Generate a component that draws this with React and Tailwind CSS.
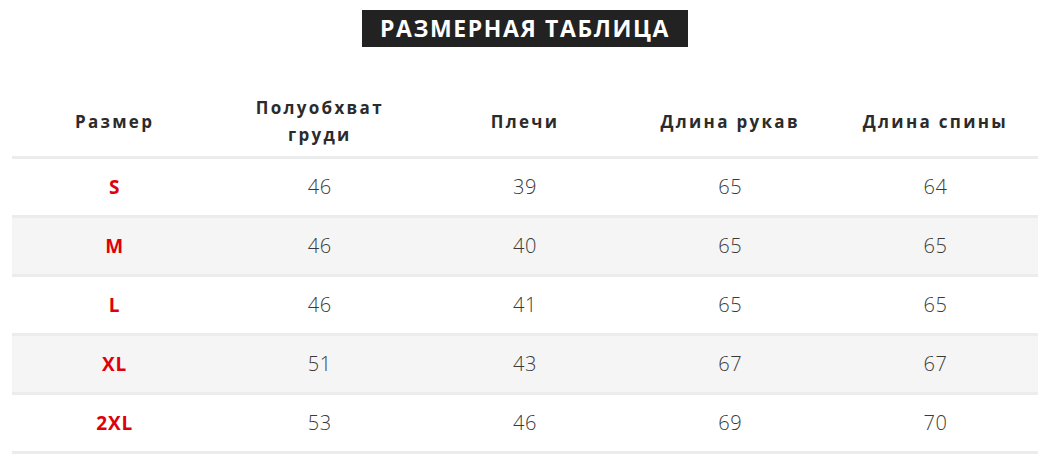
const headers = ['Размер', 'Полуобхват груди', 'Плечи', 'Длина рукав', 'Длина спины'];

const rows = [
  ['S', 46, 39, 65, 64],
  ['M', 46, 40, 65, 65],
  ['L', 46, 41, 65, 65],
  ['XL', 51, 43, 67, 67],
  ['2XL', 53, 46, 69, 70],
];

export default function App() {
  return (
    <div className="min-h-screen bg-white pt-[10px] font-['Open_Sans','DejaVu_Sans',sans-serif] text-[#333]">
      {/* Title */}
      <div className="flex justify-center">
        <div className="flex h-[37px] w-[326px] items-center justify-center bg-[#222]">
          <span className="text-[23px] font-bold uppercase tracking-[1.6px] text-white">
            Размерная таблица
          </span>
        </div>
      </div>

      {/* Table */}
      <div className="mx-[12px] mt-[39px]">
        <div className="grid h-[73px] grid-cols-5 items-center border-b-[3px] border-[#ececec]">
          {headers.map((h) => (
            <div
              key={h}
              className="mx-auto max-w-[160px] text-center text-[17px] font-bold leading-[27px] tracking-[2.3px] text-[#2b2b2b]"
            >
              {h}
            </div>
          ))}
        </div>
        {rows.map((r, i) => (
          <div
            key={r[0]}
            className={`grid h-[59px] grid-cols-5 items-center border-b-[3px] border-[#ececec] ${
              i % 2 === 1 ? 'bg-[#f5f5f5]' : 'bg-white'
            }`}
          >
            {r.map((c, j) => (
              <div
                key={j}
                className={
                  j === 0
                    ? 'text-center text-[19px] font-bold tracking-[0.8px] text-[#e0000b]'
                    : 'text-center text-[20px] font-light tracking-[0.5px] text-[#3a3a3a]'
                }
              >
                {c}
              </div>
            ))}
          </div>
        ))}
      </div>
    </div>
  );
}
